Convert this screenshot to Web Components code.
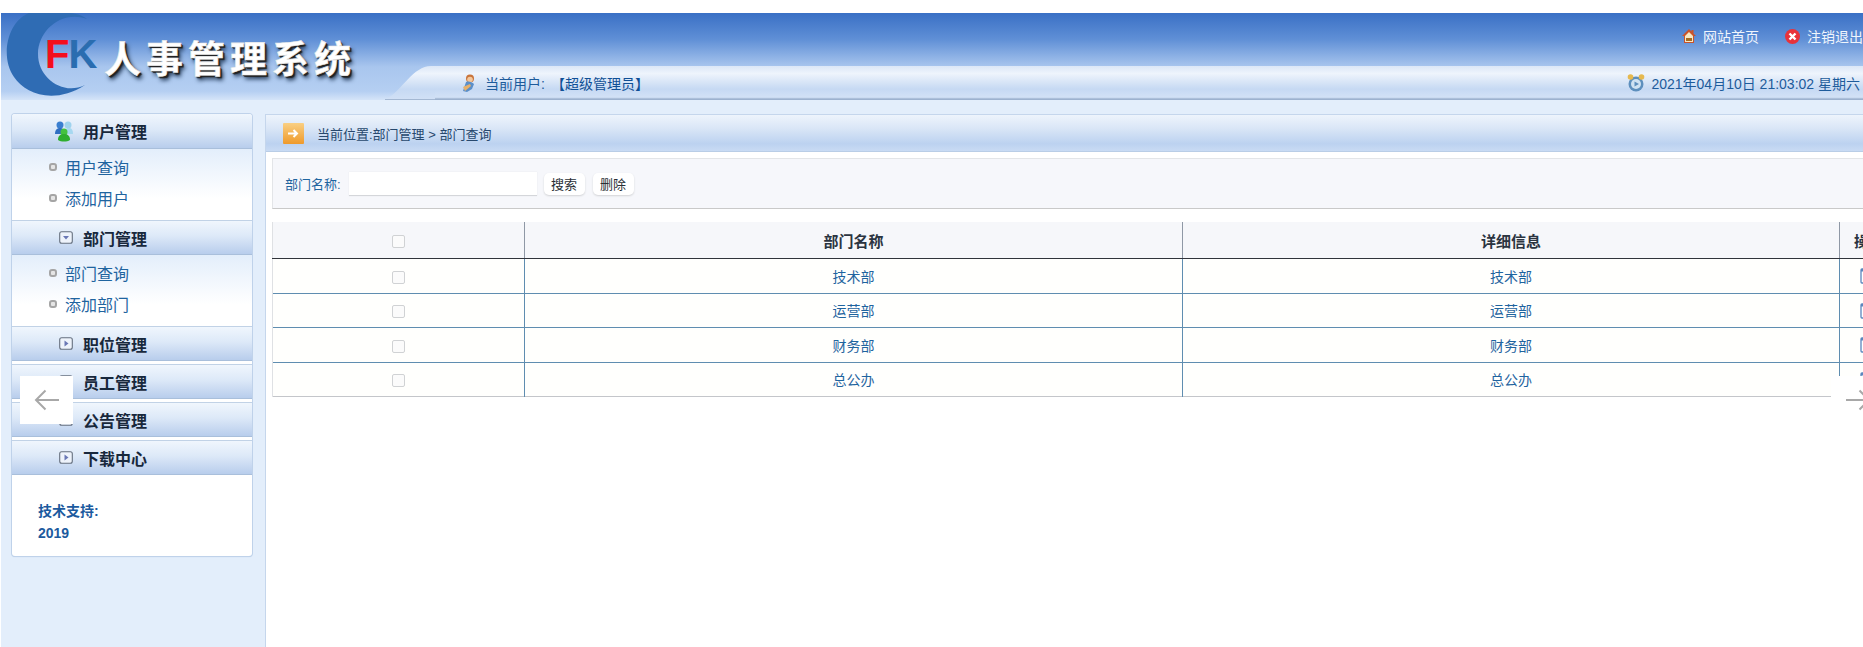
<!DOCTYPE html>
<html lang="zh">
<head>
<meta charset="utf-8">
<title>FK 人事管理系统</title>
<style>
  html, body { margin: 0; padding: 0; height: 100%; overflow: hidden; background: #fff; }
  body { font-family: "Liberation Sans", "Noto Sans CJK SC", sans-serif; }
</style>
</head>
<body>
<hr-app>
  <hr-banner slot="banner"></hr-banner>
  <side-menu slot="side">
    <menu-section label="用户管理" icon="users" open>
      <menu-link>用户查询</menu-link>
      <menu-link>添加用户</menu-link>
    </menu-section>
    <menu-section label="部门管理" icon="down" open>
      <menu-link>部门查询</menu-link>
      <menu-link>添加部门</menu-link>
    </menu-section>
    <menu-section label="职位管理" icon="right"></menu-section>
    <menu-section label="员工管理" icon="right"></menu-section>
    <menu-section label="公告管理" icon="right"></menu-section>
    <menu-section label="下载中心" icon="right"></menu-section>
  </side-menu>
  <crumb-bar slot="main">当前位置:部门管理 &gt; 部门查询</crumb-bar>
  <search-bar slot="main"></search-bar>
  <dept-table slot="main"></dept-table>
  <nav-arrow slot="over" dir="left"></nav-arrow>
  <nav-arrow slot="over" dir="right"></nav-arrow>
</hr-app>

<script>
customElements.define("hr-app", class extends HTMLElement {
    connectedCallback() {
        this.attachShadow({mode: 'open'});
        this.shadowRoot.innerHTML = `
        <style>
          :host { display: block; width: 1920px; height: 647px; padding: 13px 0 0 1px; box-sizing: border-box; position: relative; overflow: hidden; }
          .body { display: flex; height: 547px; background: #e3eefb; }
          .side { width: 264px; padding: 14px 0 0 11px; box-sizing: border-box; flex: none; }
          .main { flex: 1; margin-top: 14px; background: #fff; border-left: 1px solid #c5d6ec; }
        </style>
        <slot name="banner"></slot>
        <div class="body">
          <div class="side"><slot name="side"></slot></div>
          <div class="main"><slot name="main"></slot></div>
        </div>
        <slot name="over"></slot>
        `;
    }
});

customElements.define("hr-banner", class extends HTMLElement {
    connectedCallback() {
        this.attachShadow({mode: 'open'});
        this.shadowRoot.innerHTML = `
        <style>
          :host { display: flex; height: 87px; background: linear-gradient(#3a70c5 0%, #5f8fd6 30%, #a9c6ee 62%, #b5cff2 90%, #d5e4f8 100%); }
          .logo { width: 384px; flex: none; display: flex; align-items: flex-start; }
          .mark { width: 100px; height: 87px; flex: none; margin-right: -2px; position: relative; }
          .mark svg { display: block; }
          .fk { position: absolute; left: 44px; top: 19px; font: bold 40px/44px "Liberation Sans", sans-serif; letter-spacing: -1px; }
          .fk b { color: #f40e1c; }
          .fk i { color: #2a6db0; font-style: normal; }
          h1 { margin: 20px 0 0 5px; font: 700 37px/48px "Noto Sans CJK SC", sans-serif; letter-spacing: 5px; color: #fff; white-space: nowrap;
               -webkit-text-stroke: .6px #e8e8e8; text-shadow: 1px 1px 0 #222, 2px 2px 1px #222, 3px 4px 4px #1e3553; }
          .right { flex: 1; min-width: 0; display: flex; flex-direction: column; }
          .links { height: 53px; display: flex; justify-content: flex-end; align-items: center; padding-right: 0; padding-bottom: 7px; box-sizing: border-box; gap: 7px;
                   font-size: 14px; color: #f0f5fc; margin-right: 57px; }
          .links span { display: flex; align-items: center; gap: 6px; white-space: nowrap; }
          .links span + span { margin-left: 18px; }
          .bar { height: 34px; display: flex; }
          .bar svg.slope { flex: none; display: block; }
          .strip { flex: 1; display: flex; align-items: center; justify-content: space-between; padding: 0 60px 0 24px; font-size: 14px; color: #1d5b9b;
                   background: linear-gradient(#dbe7f7 0%, #eef4fc 22%, #c6d9f3 68%, #d2e1f6 92%, #9db2cf 97%); }
          .strip span { display: flex; align-items: center; gap: 6px; white-space: nowrap; }
          .strip em { font-style: normal; color: #0f4f95; }
        </style>
        <div class="logo">
          <div class="mark">
            <svg width="100" height="87" viewBox="0 0 100 87">
              <path d="M28 0 C6 9 -1 44 13 64 C24 81 53 92 84 72 C62 83 37 65 37 41 C37 18 60 -3 86 6 C78 0 70 0 64 0 Z" fill="#2f6cb4"/>
            </svg>
            <div class="fk"><b>F</b><i>K</i></div>
          </div>
          <h1>人事管理系统</h1>
        </div>
        <div class="right">
          <div class="links">
            <span><svg width="16" height="16" viewBox="0 0 16 16"><path d="M8 1 1 8h2v7h10V8h2l-2.500-2.500V2h-2v1.500Z" fill="#c9532a"/><path d="M4 8 8 4l4 4v6H4Z" fill="#f7e7c4"/><rect x="5" y="10" width="6" height="3" fill="#a66b1f"/></svg>网站首页</span>
            <span><svg width="17" height="17" viewBox="0 0 17 17"><circle cx="8.500" cy="8.500" r="7.500" fill="#e8323a"/><path d="M5.500 5.500l6 6m0-6-6 6" stroke="#fff" stroke-width="2.400"/></svg>注销退出</span>
          </div>
          <div class="bar">
            <svg class="slope" width="50" height="34" viewBox="0 0 50 34">
              <defs><linearGradient id="s" x1="0" y1="0" x2="0" y2="1">
                <stop offset="0" stop-color="#dbe7f7"/><stop offset=".22" stop-color="#eef4fc"/><stop offset=".68" stop-color="#c6d9f3"/><stop offset="1" stop-color="#d2e1f6"/>
              </linearGradient></defs>
              <path d="M0 34 C18 24 28 0 46 0 H50 V34 Z" fill="url(#s)"/>
              <path d="M0 33.500 H50" stroke="#a4b8d3"/>
            </svg>
            <div class="strip">
              <span>
                <svg width="20" height="20" viewBox="0 0 20 20"><circle cx="11" cy="5.500" r="4" fill="#c9743a"/><circle cx="11" cy="6.500" r="2.800" fill="#f3c79c"/><path d="M4 18 7 9c3-1 6 0 8 2l-2 5-5 3Z" fill="#5b8fc9"/><path d="M4 14l7-3 1 2-6 5Z" fill="#e8b16a"/></svg>
                当前用户:<em>【超级管理员】</em>
              </span>
              <span>
                <svg width="18" height="20" viewBox="0 0 18 20"><circle cx="9" cy="11" r="7.500" fill="#5d8fbd"/><circle cx="9" cy="11" r="5" fill="#cfe2f2"/><circle cx="3.500" cy="4" r="2.800" fill="#e6b94f"/><circle cx="14.500" cy="4" r="2.800" fill="#e6b94f"/><path d="M7.500 8.500 12 11l-4.500 2.500Z" fill="#5d8fbd"/></svg>
                2021年04月10日 21:03:02 星期六
              </span>
            </div>
          </div>
        </div>
        `;
    }
});

customElements.define("side-menu", class extends HTMLElement {
    connectedCallback() {
        this.attachShadow({mode: 'open'});
        this.shadowRoot.innerHTML = `
        <style>
          :host { display: block; width: 240px; height: 442px; box-sizing: border-box; background: #fff; border-radius: 3px; box-shadow: 0 0 0 1px #bfd2ea, 0 1px 1px #b8cbe3; }
          .foot { padding: 25px 26px 0; font: bold 14px/22px "Liberation Sans", "Noto Sans CJK SC", sans-serif; color: #1c5a9e; }
        </style>
        <slot></slot>
        <div class="foot">技术支持:<br>2019</div>
        `;
    }
});

const menuIcons = {
    users: `<svg width="22" height="22" viewBox="0 0 22 22"><circle cx="7" cy="5" r="3.500" fill="#3a7fd0"/><circle cx="15" cy="5" r="3.500" fill="#9fd3ee"/><path d="M2 14c0-6 4-6 6-6s3 2 3 6Z" fill="#2f6fc2"/><path d="M12 14c0-6 2-6 4-6s4 1 4 6Z" fill="#a7d8f0"/><circle cx="11" cy="12" r="3.500" fill="#45c23f"/><path d="M5 20c0-5 3-6 6-6s6 1 6 6c-3 2-9 2-12 0Z" fill="#2fae2f"/></svg>`,
    down: `<svg width="14" height="14" viewBox="0 0 14 14"><rect x=".7" y=".7" width="12.600" height="11.600" rx="2" fill="#eef3fb" stroke="#66707f" stroke-width="1.100"/><path d="M4 5h6L7 8.500Z" fill="#6a78b5"/></svg>`,
    right: `<svg width="14" height="14" viewBox="0 0 14 14"><rect x=".7" y=".7" width="12.600" height="11.600" rx="2" fill="#eef3fb" stroke="#66707f" stroke-width="1.100"/><path d="M5.500 3.500v6L9.500 6.500Z" fill="#6a78b5"/></svg>`
};

customElements.define("menu-section", class extends HTMLElement {
    connectedCallback() {
        let open = this.hasAttribute("open");
        let icon = this.getAttribute("icon");
        this.attachShadow({mode: 'open'});
        this.shadowRoot.innerHTML = `
        <style>
          :host { display: block; }
          .head { height: 35px; box-sizing: border-box; display: flex; align-items: center; border-bottom: 1px solid #a9bfdb; border-top: 1px solid #c1d2e6;
                  background: linear-gradient(#f0f6fd 0%, #dde9f8 45%, #b8cdec 100%); font: bold 16px "Liberation Sans", "Noto Sans CJK SC", sans-serif; color: #18283c; margin-bottom: ${open ? 0 : 3}px; }
          .ico { width: 71px; flex: none; display: flex; justify-content: flex-end; padding-right: 10px; box-sizing: border-box; }
          .big .ico { padding-right: 8px; }
          .items { background: linear-gradient(#e3eefb, #fff 70%); padding: 2px 0 6px; height: 71px; box-sizing: border-box; display: flex; flex-direction: column; justify-content: space-around; }
          :host(:first-child) .head { border-top: 0; border-radius: 3px 3px 0 0; }
          :host(:last-of-type) .head { margin-bottom: 0; }
        </style>
        <div class="head ${icon === 'users' ? 'big' : ''}"><span class="ico">${menuIcons[icon]}</span>${this.getAttribute("label")}</div>
        ${open ? '<div class="items"><slot></slot></div>' : ''}
        `;
    }
});

customElements.define("menu-link", class extends HTMLElement {
    connectedCallback() {
        this.attachShadow({mode: 'open'});
        this.shadowRoot.innerHTML = `
        <style>
          :host { display: flex; align-items: center; height: 31px; padding-left: 37px; font: 16px "Liberation Sans", "Noto Sans CJK SC", sans-serif; color: #1f649f; }
          i { width: 8px; height: 8px; box-sizing: border-box; border: 2px solid #a5a5a5; background: #e5e5e5; border-radius: 3px; margin-right: 8px; flex: none; }
        </style>
        <i></i><slot></slot>
        `;
    }
});

customElements.define("crumb-bar", class extends HTMLElement {
    connectedCallback() {
        this.attachShadow({mode: 'open'});
        this.shadowRoot.innerHTML = `
        <style>
          :host { display: flex; align-items: center; height: 38px; box-sizing: border-box; padding-left: 17px; gap: 13px; border-top: 1px solid #c5d6ec; border-bottom: 1px solid #b9cde6;
                  background: linear-gradient(#eef4fc 0%, #dbe7f7 35%, #bcd2f0 80%, #c9dbf4 100%); font: 13px "Liberation Sans", "Noto Sans CJK SC", sans-serif; color: #27486d; }
          svg { flex: none; }
        </style>
        <svg width="21" height="21" viewBox="0 0 21 21"><defs><linearGradient id="o" x1="0" y1="0" x2="0" y2="1"><stop offset="0" stop-color="#f9cf83"/><stop offset="1" stop-color="#ef9a2b"/></linearGradient></defs><rect width="21" height="21" rx="1" fill="url(#o)"/><path d="M5 10.500h9m-3.500-3.500 3.500 3.500-3.500 3.500" fill="none" stroke="#fff" stroke-width="2"/></svg>
        <slot></slot>
        `;
    }
});

customElements.define("search-bar", class extends HTMLElement {
    connectedCallback() {
        this.attachShadow({mode: 'open'});
        this.shadowRoot.innerHTML = `
        <style>
          :host { display: flex; align-items: center; height: 51px; box-sizing: border-box; margin: 6px 0 0 6px; padding-left: 12px; background: #f6f7fb; border: 1px solid #e3e5e8; border-bottom-color: #c9c9c9;
                  font: 13px "Liberation Sans", "Noto Sans CJK SC", sans-serif; color: #1f649f; }
          .in { width: 188px; height: 24px; box-sizing: border-box; margin-left: 8px; background: #fff; border: 0; border-bottom: 1px solid #d4d6da; box-shadow: 0 0 1px #dfe1e5; margin-right: 7px; }
          button { width: 41px; height: 22px; box-sizing: border-box; padding: 0; border: 0; border-radius: 5px; background: #fff; box-shadow: 0 1px 2px #d2d3d6; font: 13px "Liberation Sans", "Noto Sans CJK SC", sans-serif; color: #2a2f36; margin-right: 8px; }
        </style>
        部门名称:<div class="in"></div><button>搜索</button><button>删除</button>
        `;
    }
});

customElements.define("dept-table", class extends HTMLElement {
    connectedCallback() {
        let rows = ["技术部", "运营部", "财务部", "总公办"];
        this.attachShadow({mode: 'open'});
        this.shadowRoot.innerHTML = `
        <style>
          :host { display: block; margin: 13px 0 0 6px; font: 14px "Liberation Sans", "Noto Sans CJK SC", sans-serif; color: #1f649f; }
          table { border-collapse: collapse; table-layout: fixed; width: 1640px; border-bottom: 1px solid #c4c6ca; }
          th { height: 36px; padding: 0; background: #f6f7fa; font: bold 15px "Liberation Sans", "Noto Sans CJK SC", sans-serif; color: #2b3440; border-bottom: 1px solid #30343a; border-left: 1px solid #8f98a5; text-align: center; }
          td { height: 33.500px; padding: 0; text-align: center; border-top: 1px solid #5f8db0; border-left: 1px solid #5f8db0; background: #fffffd; }
          tr:first-child td { border-top: 0; }
          th:first-child, td:first-child { border-left: 1px solid #dfe1e4; }
          .cb { display: inline-block; width: 13px; height: 13px; box-sizing: border-box; border: 1px solid #d0d2d4; border-radius: 2px; background: #fbfbfb; vertical-align: middle; }
          svg { display: inline-block; vertical-align: middle; }
          .op { padding-left: 14px; text-align: left; }
        </style>
        <table>
          <colgroup><col style="width:252px"><col style="width:658px"><col style="width:657px"><col style="width:73px"></colgroup>
          <thead><tr><th><span class="cb"></span></th><th>部门名称</th><th>详细信息</th><th class="op">操作</th></tr></thead>
          <tbody>
          ${rows.map(r => `<tr><td><span class="cb"></span></td><td>${r}</td><td>${r}</td><td class="op" style="padding-left:20px"><svg width="14" height="16" viewBox="0 0 14 16"><rect x="1" y="1" width="12" height="14" rx="1" fill="#fff" stroke="#5a86bd" stroke-width="1.300"/><rect x="1" y="1" width="12" height="2.500" fill="#5a86bd"/></svg></td></tr>`).join("")}
          </tbody>
        </table>
        `;
    }
});

customElements.define("nav-arrow", class extends HTMLElement {
    connectedCallback() {
        let left = this.getAttribute("dir") === "left";
        this.attachShadow({mode: 'open'});
        this.shadowRoot.innerHTML = `
        <style>
          :host { position: absolute; top: 376px; ${left ? 'left: 20px' : 'left: 1831px'}; width: 53px; height: 48px; background: #fff; display: flex; align-items: center; justify-content: center; }
        </style>
        <svg width="26" height="22" viewBox="0 0 26 22" style="${left ? '' : 'transform: scaleX(-1)'}"><path d="M25 11H2M11.500 1.500 2 11l9.500 9.500" fill="none" stroke="#a8a8a8" stroke-width="2"/></svg>
        `;
    }
});
</script>
</body>
</html>
